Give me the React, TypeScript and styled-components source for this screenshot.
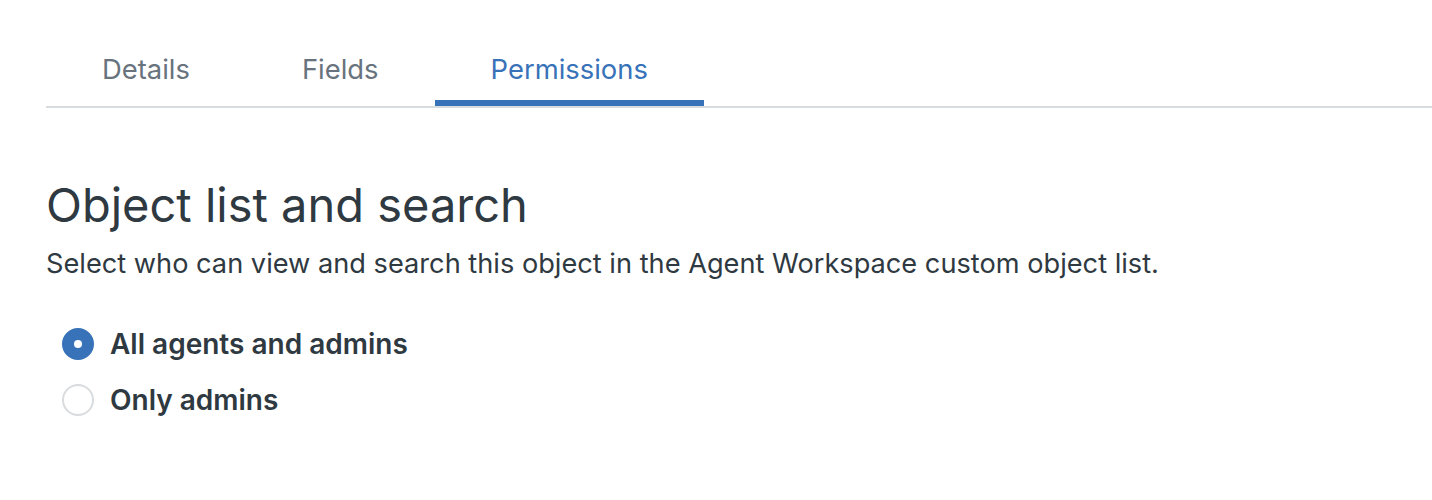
import { useState } from "react";
import styled, { createGlobalStyle } from "styled-components";

const GlobalStyle = createGlobalStyle`
  body {
    margin: 0;
    background: #ffffff;
    font-family: Inter, "Noto Sans", "Liberation Sans", sans-serif;
    color: #2f3941;
  }
`;

const tabs = ["Details", "Fields", "Permissions"];

const options = [
  { id: "all", label: "All agents and admins" },
  { id: "admins", label: "Only admins" },
];

const App = () => {
  const [selectedTab, setSelectedTab] = useState("Permissions");
  const [access, setAccess] = useState("all");

  return (
    <>
      <GlobalStyle />
      <Page>
        <TabList>
          {tabs.map((tab) => (
            <Tab
              key={tab}
              $selected={tab === selectedTab}
              onClick={() => setSelectedTab(tab)}
            >
              {tab}
            </Tab>
          ))}
        </TabList>
        <Section>
          <Heading>Object list and search</Heading>
          <Hint>
            Select who can view and search this object in the Agent Workspace
            custom object list.
          </Hint>
          <RadioGroup>
            {options.map((option) => (
              <RadioLabel key={option.id}>
                <RadioInput
                  type="radio"
                  name="access"
                  checked={access === option.id}
                  onChange={() => setAccess(option.id)}
                />
                <RadioMark $checked={access === option.id} />
                {option.label}
              </RadioLabel>
            ))}
          </RadioGroup>
        </Section>
      </Page>
    </>
  );
};

const Page = styled.div`
  padding: 40px 0 0 46px;
`;

const TabList = styled.div`
  display: flex;
  border-bottom: 2px solid #d8dcde;
`;

const Tab = styled.button<{ $selected: boolean }>`
  background: transparent;
  border: none;
  border-bottom: 6px solid
    ${({ $selected }) => ($selected ? "#3872b8" : "transparent")};
  padding: 9px 56px 11px;
  font-family: inherit;
  font-size: 27.4px;
  line-height: 40px;
  color: ${({ $selected }) => ($selected ? "#3872b8" : "#68737d")};
  cursor: pointer;
`;

const Section = styled.div`
  padding-top: 65px;
`;

const Heading = styled.h2`
  margin: 0 0 7px;
  font-size: 47px;
  font-weight: 400;
  line-height: 64px;
  color: #2f3941;
`;

const Hint = styled.p`
  margin: 0;
  font-size: 27.2px;
  line-height: 40px;
  color: #2f3941;
`;

const RadioGroup = styled.div`
  display: flex;
  flex-direction: column;
  gap: 16px;
  margin-top: 40px;
  padding-left: 16px;
`;

const RadioLabel = styled.label`
  display: flex;
  align-items: center;
  gap: 16px;
  font-size: 28px;
  font-weight: 600;
  line-height: 40px;
  color: #2f3941;
  cursor: pointer;
`;

const RadioInput = styled.input`
  position: absolute;
  opacity: 0;
  width: 0;
  height: 0;
`;

const RadioMark = styled.span<{ $checked: boolean }>`
  box-sizing: border-box;
  width: 32px;
  height: 32px;
  border-radius: 50%;
  border: 2px solid ${({ $checked }) => ($checked ? "#3872b8" : "#d8dcde")};
  background: ${({ $checked }) => ($checked ? "#3872b8" : "#ffffff")};
  display: flex;
  align-items: center;
  justify-content: center;

  &::after {
    content: "";
    width: 8px;
    height: 8px;
    border-radius: 50%;
    background: #ffffff;
    display: ${({ $checked }) => ($checked ? "block" : "none")};
  }
`;

export default App;
